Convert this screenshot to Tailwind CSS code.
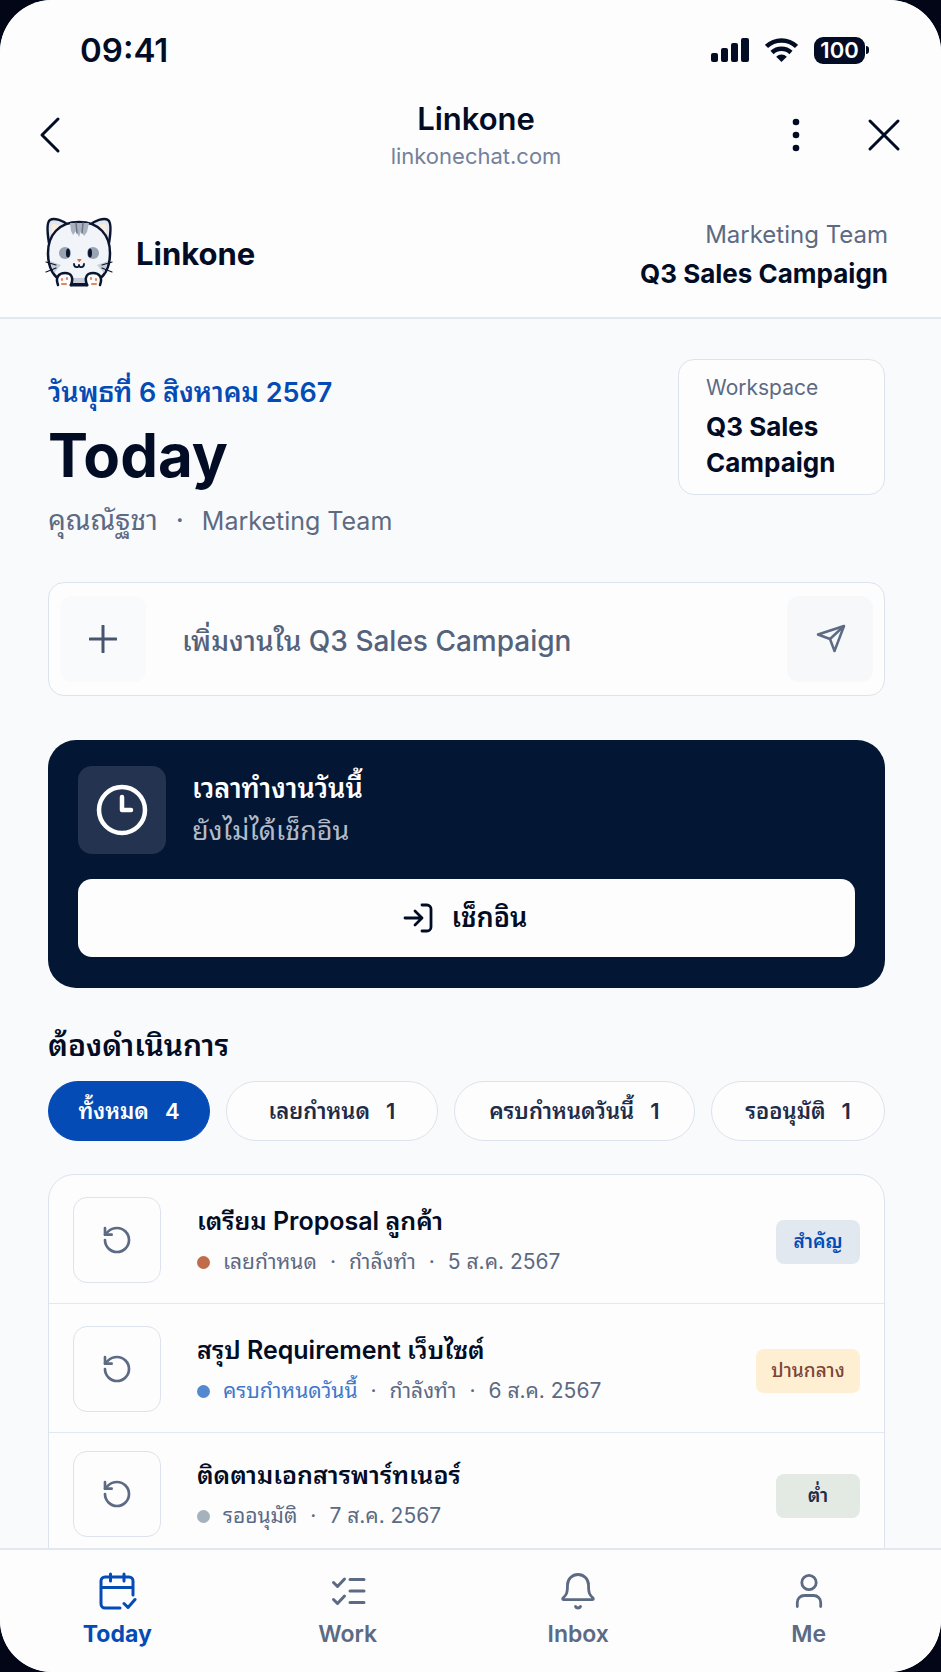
<!DOCTYPE html>
<html lang="th">
<head>
    <meta charset="UTF-8">
    <meta name="viewport" content="width=device-width, initial-scale=1.0">
    <title>Linkone - Today</title>

    <script src="https://cdn.jsdelivr.net/npm/@tailwindcss/browser@4"></script>
</head>
<body class="bg-[#020617]">

    <div id="app" class="flex flex-col h-screen overflow-hidden rounded-[52px] bg-[#f9fafc] font-['Inter','Noto_Sans_Thai_Looped','Noto_Sans_Thai','Noto_Sans',sans-serif] text-[#020c24]">

        <header class="shrink-0 bg-[#fdfdfe] border-b-2 border-[#e2e8f0]">

            <!-- status bar -->
            <div class="flex items-center justify-between pl-20 pr-[72px] pt-7">
                <span class="text-[33px] leading-[44px] font-semibold">09:41</span>
                <div class="flex items-center gap-4">
                    <svg class="w-[38px] h-6" viewBox="0 0 38 24" fill="currentColor">
                        <rect x="0" y="15" width="7" height="9" rx="2" />
                        <rect x="10" y="10" width="7" height="14" rx="2" />
                        <rect x="20" y="5" width="7" height="19" rx="2" />
                        <rect x="30" y="0" width="8" height="24" rx="2" />
                    </svg>
                    <svg class="w-[33px] h-6" viewBox="0 0 33 24" fill="none" stroke="currentColor" stroke-width="4.5">
                        <path d="M1.5 8.5a21.5 21.5 0 0 1 30 0" />
                        <path d="M7 14.5a13.8 13.8 0 0 1 19 0" />
                        <path d="M16.500 24l-5.300-5.300a7.500 7.500 0 0 1 10.600 0z" fill="currentColor" stroke="none" />
                    </svg>
                    <div class="flex items-center gap-px">
                        <span class="w-[51px] h-[27px] rounded-[9px] bg-[#020c24] text-white text-[22px] leading-[27px] font-semibold text-center">100</span>
                        <span class="w-[3px] h-2 rounded-r-full bg-[#020c24]"></span>
                    </div>
                </div>
            </div>

            <!-- browser bar -->
            <div class="flex items-center pl-8 pr-[37px] pt-[26px]">
                <button type="button" aria-label="Back" class="w-[136px] h-12 text-left">
                    <svg class="w-9 h-10" viewBox="0 0 36 40" fill="none" stroke="currentColor" stroke-width="3" stroke-linecap="round" stroke-linejoin="round">
                        <path d="M26 4L10 20l16 16" />
                    </svg>
                </button>
                <div class="flex-1 text-center">
                    <p class="text-[31px] leading-[42px] font-semibold">Linkone</p>
                    <p class="text-[22px] leading-8 text-[#74819a]">linkonechat.com</p>
                </div>
                <div class="flex items-center justify-end gap-12 w-[120px]">
                    <button type="button" aria-label="More" class="w-10 h-12">
                        <svg class="w-10 h-10" viewBox="0 0 40 40" fill="currentColor">
                            <circle cx="20" cy="7" r="3.300" />
                            <circle cx="20" cy="20" r="3.300" />
                            <circle cx="20" cy="33" r="3.300" />
                        </svg>
                    </button>
                    <button type="button" aria-label="Close" class="w-10 h-12">
                        <svg class="w-10 h-10" viewBox="0 0 40 40" fill="none" stroke="currentColor" stroke-width="3" stroke-linecap="round">
                            <path d="M6 6l28 28M34 6L6 34" />
                        </svg>
                    </button>
                </div>
            </div>

            <!-- brand -->
            <div class="flex items-center justify-between pl-10 pr-[53px] pt-[43px] pb-6">
                <a href="#" class="flex items-center gap-[18px]">
                    <svg class="w-[78px] h-[76px]" viewBox="0 1 78 76" stroke-linecap="round" stroke-linejoin="round">
                        <path d="M9 28C7 16 7 7 10 5c4-3 14 1 18 5M69 28c2-12 2-21-1-23c-4-3-14 1-18 5" fill="#e3e7ee" stroke="#0b1530" stroke-width="2.500" />
                        <path d="M12 20c-1-7-1-10 1-11c3 0 6 1 9 3zM66 20c1-7 1-10-1-11c-3 0-6 1-9 3z" fill="#fbeedd" />
                        <path d="M39 7C19 7 8 20 8 38c0 16 6 24 16 30h30c10-6 16-14 16-30C70 20 59 7 39 7z" fill="#f1f4f8" stroke="#0b1530" stroke-width="2.500" />
                        <path d="M30 8h19l-2 9-3 4-3-5-2 6-3-6-3 4-2-4z" fill="#aab2c0" />
                        <path d="M36 8l1 10M43 8l-1 10" stroke="#6b7484" stroke-width="1.500" />
                        <path d="M10 46l11 4-7 8zM68 46l-11 4 7 8z" fill="#c7cdd7" />
                        <ellipse cx="25" cy="38" rx="6" ry="6" fill="#9aa3b2" />
                        <ellipse cx="53" cy="38" rx="6" ry="6" fill="#9aa3b2" />
                        <ellipse cx="28" cy="38" rx="2" ry="4.500" fill="#0b1530" />
                        <ellipse cx="50" cy="38" rx="2" ry="4.500" fill="#0b1530" />
                        <path d="M38 44.500h3l-1.500 2z" fill="#e06a35" stroke="#e06a35" />
                        <path d="M34 49c0 4 5 4 5 1c0 3 5 3 5-1" fill="none" stroke="#0b1530" stroke-width="1.800" />
                        <path d="M6 47l10 3M6 57l10-4M72 47l-10 3M72 57l-10-4" stroke="#0b1530" stroke-width="1.200" />
                        <path d="M30 68h18l2-5H28z" fill="#c7cdd7" />
                        <path d="M18 70c-3-8 1-12 7-12s9 4 6 12M60 70c3-8-1-12-7-12s-9 4-6 12" fill="#fff" stroke="#0b1530" stroke-width="2.500" />
                        <path d="M31 70h16" stroke="#0b1530" stroke-width="3" />
                        <path d="M22 64v1M27 63v1M22 69h4M51 63v1M56 64v1M52 69h4" stroke="#df8a62" stroke-width="2.200" />
                    </svg>
                    <span class="text-[31px] leading-9 font-bold">Linkone</span>
                </a>
                <div class="text-right">
                    <p class="text-[24px] leading-[39px] text-[#5c6a83]">Marketing Team</p>
                    <p class="text-[26px] leading-[39px] font-bold">Q3 Sales Campaign</p>
                </div>
            </div>
        </header>

        <main class="flex-1 min-h-0 overflow-hidden pl-12 pr-14 pt-10">

            <!-- heading -->
            <section class="flex items-start justify-between">
                <div class="pt-3">
                    <p class="text-[27px] leading-[44px] font-semibold text-[#054bb5]">วันพุธที่ 6 สิงหาคม 2567</p>
                    <h1 class="text-[60px] leading-[80px] font-bold">Today</h1>
                    <p class="flex items-baseline gap-[18px] text-[28px] leading-[50px] text-[#5c6a83]"><span>คุณณัฐชา</span><span>·</span><span class="text-[25px]">Marketing Team</span></p>
                </div>
                <div class="w-[207px] h-[136px] px-[27px] pt-[10px] bg-[#fdfdfe] border border-[#dce3ed] rounded-2xl">
                    <p class="text-[21px] leading-[36px] text-[#5c6a83]">Workspace</p>
                    <p class="mt-[3px] text-[26px] leading-[36px] font-bold">Q3 Sales Campaign</p>
                </div>
            </section>

            <!-- add a task -->
            <form class="flex items-center mt-9 px-[11px] h-[114px] bg-[#fdfdfe] border border-[#dce3ed] rounded-2xl">
                <button type="button" aria-label="Add" class="flex items-center justify-center size-[86px] bg-[#f9fafc] rounded-xl text-[#47556e]">
                    <svg class="size-7" viewBox="0 0 28 28" fill="none" stroke="currentColor" stroke-width="3" stroke-linecap="round">
                        <path d="M14 1v26M1 14h26" />
                    </svg>
                </button>
                <input type="text" aria-label="เพิ่มงาน" placeholder="เพิ่มงานใน Q3 Sales Campaign" class="flex-1 min-w-0 h-16 ml-9 pt-1 text-[28px] font-medium outline-none placeholder:text-[#54627b]">
                <button type="submit" aria-label="Send" class="flex items-center justify-center size-[86px] bg-[#f6f8fa] rounded-xl text-[#5c6a83]">
                    <svg class="size-8" viewBox="0 0 32 32" fill="none" stroke="currentColor" stroke-width="2.500" stroke-linejoin="round">
                        <path d="M30 3L4 11.500l12 4.500 4.500 12z" />
                        <path d="M30 3L16 16" />
                    </svg>
                </button>
            </form>

            <!-- check in -->
            <section class="mt-11 pt-[26px] px-[30px] pb-[31px] bg-[#031633] rounded-[28px]">
                <div class="flex items-center gap-[26px]">
                    <div class="flex items-center justify-center size-[88px] bg-[#243350] rounded-[14px] text-white">
                        <svg class="size-[52px]" viewBox="0 0 52 52" fill="none" stroke="currentColor" stroke-width="4.500" stroke-linecap="round" stroke-linejoin="round">
                            <circle cx="26" cy="26" r="23" />
                            <path d="M26 13v13h9" />
                        </svg>
                    </div>
                    <div>
                        <h2 class="text-[27px] leading-[42px] font-semibold text-white">เวลาทำงานวันนี้</h2>
                        <p class="text-[27px] leading-[42px] text-[#b4bbc8]">ยังไม่ได้เช็กอิน</p>
                    </div>
                </div>
                <button type="button" class="flex items-center justify-center gap-[18px] w-full h-[78px] mt-[25px] pr-1 bg-[#fdfdfe] rounded-[14px]">
                    <svg class="size-8" viewBox="0 0 32 32" fill="none" stroke="currentColor" stroke-width="2.800" stroke-linecap="round" stroke-linejoin="round">
                        <path d="M3 16h17M13 9l7 7-7 7M20 3h5a4 4 0 0 1 4 4v18a4 4 0 0 1-4 4h-5" />
                    </svg>
                    <span class="text-[27px] font-semibold">เช็กอิน</span>
                </button>
            </section>

            <h2 class="mt-9 text-[30px] leading-[42px] font-semibold">ต้องดำเนินการ</h2>

            <div class="flex gap-4 mt-[15px] text-[22px] font-semibold text-[#1e2c48]">
                <button type="button" class="flex items-center justify-center gap-4 grow-[162] basis-0 h-[60px] bg-[#054bb5] border border-[#054bb5] rounded-full text-white"><span>ทั้งหมด</span><span>4</span></button>
                <button type="button" class="flex items-center justify-center gap-4 grow-[212] basis-0 h-[60px] bg-[#fdfdfe] border border-[#dce3ed] rounded-full"><span>เลยกำหนด</span><span>1</span></button>
                <button type="button" class="flex items-center justify-center gap-4 grow-[242] basis-0 h-[60px] bg-[#fdfdfe] border border-[#dce3ed] rounded-full"><span>ครบกำหนดวันนี้</span><span>1</span></button>
                <button type="button" class="flex items-center justify-center gap-4 grow-[174] basis-0 h-[60px] bg-[#fdfdfe] border border-[#dce3ed] rounded-full"><span>รออนุมัติ</span><span>1</span></button>
            </div>

            <!-- task list -->
            <ul class="mt-[33px] bg-[#fdfdfe] border border-[#dce3ed] rounded-t-[26px] divide-y divide-[#e2e8f0]">
                <li class="flex items-center pt-[22px] pb-5 px-6">
                    <button type="button" aria-label="Change status" class="flex items-center justify-center w-[88px] h-[86px] border border-[#dce3ed] rounded-[14px] text-[#5c6a83]">
                        <svg class="size-8" viewBox="0 0 24 24" fill="none" stroke="currentColor" stroke-width="2" stroke-linecap="round" stroke-linejoin="round">
                            <path d="M3 12a9 9 0 1 0 9-9 9.750 9.750 0 0 0-6.740 2.740L3 8" />
                            <path d="M3 3v5h5" />
                        </svg>
                    </button>
                    <div class="flex-1 ml-9 pt-1">
                        <h3 class="text-[25px] leading-[40px] font-semibold">เตรียม Proposal ลูกค้า</h3>
                        <p class="flex items-center gap-[13px] text-[21px] leading-[42px] text-[#5c6a83]"><span class="size-[13px] rounded-full bg-[#c06c4b]"></span><span>เลยกำหนด</span><span>·</span><span>กำลังทำ</span><span>·</span><span>5 ส.ค. 2567</span></p>
                    </div>
                    <span class="w-[84px] h-11 mt-1 rounded-lg bg-[#e2e8f0] text-center text-[19px] leading-[44px] font-semibold text-[#054bb5]">สำคัญ</span>
                </li>
                <li class="flex items-center pt-[22px] pb-5 px-6">
                    <button type="button" aria-label="Change status" class="flex items-center justify-center w-[88px] h-[86px] border border-[#dce3ed] rounded-[14px] text-[#5c6a83]">
                        <svg class="size-8" viewBox="0 0 24 24" fill="none" stroke="currentColor" stroke-width="2" stroke-linecap="round" stroke-linejoin="round">
                            <path d="M3 12a9 9 0 1 0 9-9 9.750 9.750 0 0 0-6.740 2.740L3 8" />
                            <path d="M3 3v5h5" />
                        </svg>
                    </button>
                    <div class="flex-1 ml-9 pt-1">
                        <h3 class="text-[25px] leading-[40px] font-semibold">สรุป Requirement เว็บไซต์</h3>
                        <p class="flex items-center gap-[13px] text-[21px] leading-[42px] text-[#5c6a83]"><span class="size-[13px] rounded-full bg-[#5488cf]"></span><span class="text-[#3f78cb]">ครบกำหนดวันนี้</span><span>·</span><span>กำลังทำ</span><span>·</span><span>6 ส.ค. 2567</span></p>
                    </div>
                    <span class="w-[104px] h-11 mt-1 rounded-lg bg-[#feefd2] text-center text-[19px] leading-[44px] font-medium text-[#7d4437]">ปานกลาง</span>
                </li>
                <li class="flex items-center pt-[18px] pb-6 px-6">
                    <button type="button" aria-label="Change status" class="flex items-center justify-center w-[88px] h-[86px] border border-[#dce3ed] rounded-[14px] text-[#5c6a83]">
                        <svg class="size-8" viewBox="0 0 24 24" fill="none" stroke="currentColor" stroke-width="2" stroke-linecap="round" stroke-linejoin="round">
                            <path d="M3 12a9 9 0 1 0 9-9 9.750 9.750 0 0 0-6.740 2.740L3 8" />
                            <path d="M3 3v5h5" />
                        </svg>
                    </button>
                    <div class="flex-1 ml-9 pt-1">
                        <h3 class="text-[25px] leading-[40px] font-semibold">ติดตามเอกสารพาร์ทเนอร์</h3>
                        <p class="flex items-center gap-[13px] text-[21px] leading-[42px] text-[#5c6a83]"><span class="size-[13px] rounded-full bg-[#a6b1be]"></span><span>รออนุมัติ</span><span>·</span><span>7 ส.ค. 2567</span></p>
                    </div>
                    <span class="w-[84px] h-11 mt-1 rounded-lg bg-[#e3eae3] text-center text-[19px] leading-[44px] font-semibold text-[#1e2c48]">ต่ำ</span>
                </li>
            </ul>
        </main>

        <nav class="shrink-0 grid grid-cols-4 pl-0.5 pr-[17px] h-[124px] pt-[22px] bg-[#fdfdfe] border-t-2 border-[#e2e8f0] text-[23px] leading-[40px] font-semibold text-[#5c6a83]">
            <a href="#" class="flex flex-col items-center gap-0.5 text-[#054bb5]">
                <svg class="size-10" viewBox="0 0 40 40" fill="none" stroke="currentColor" stroke-width="3" stroke-linecap="round" stroke-linejoin="round">
                    <path d="M23 36H8a4 4 0 0 1-4-4V9a4 4 0 0 1 4-4h24a4 4 0 0 1 4 4v14M4 15.500h32M13.500 2v7M27 2v7M27 31.500l4 4 7-8" />
                </svg>
                <span class="font-bold">Today</span>
            </a>
            <a href="#" class="flex flex-col items-center gap-0.5">
                <svg class="size-10" viewBox="0 0 40 40" fill="none" stroke="currentColor" stroke-width="3" stroke-linecap="round" stroke-linejoin="round">
                    <path d="M5.500 10.500l4 4 7-7.500M5.500 27.500l4 4 7-7.500M22 7.500h14M22 19h14M22 30.500h14" />
                </svg>
                <span>Work</span>
            </a>
            <a href="#" class="flex flex-col items-center gap-0.5">
                <svg class="size-10" viewBox="0 0 40 40" fill="none" stroke="currentColor" stroke-width="2.800" stroke-linecap="round" stroke-linejoin="round">
                    <path d="M9.500 13a10.500 10.500 0 0 1 21 0c0 8 1 10 4.500 13q1 1.700-1 1.700H6q-2 0-1-1.700c3.500-3 4.500-5 4.500-13zM17.500 34.500c1 2 4 2 5 0" />
                </svg>
                <span>Inbox</span>
            </a>
            <a href="#" class="flex flex-col items-center gap-0.5">
                <svg class="size-10" viewBox="0 0 40 40" fill="none" stroke="currentColor" stroke-width="2.800" stroke-linecap="round" stroke-linejoin="round">
                    <circle cx="20" cy="10.500" r="7.200" />
                    <path d="M8.300 34.500v-4a7 7 0 0 1 7-7h9.400a7 7 0 0 1 7 7v4" />
                </svg>
                <span>Me</span>
            </a>
        </nav>
    </div>

</body>
</html>
